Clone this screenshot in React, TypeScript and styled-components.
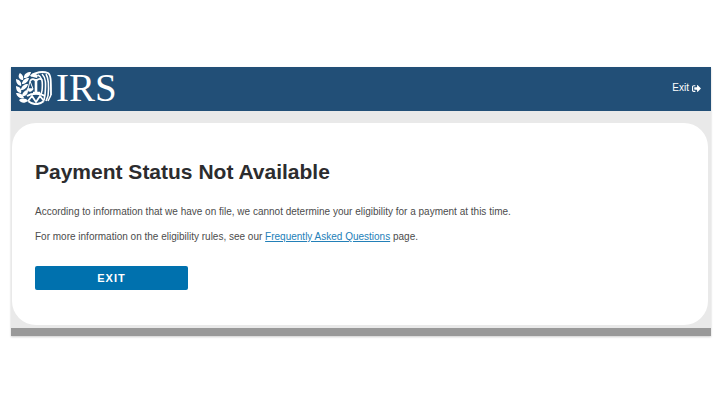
import React, { FC } from 'react';
import { FaSignOutAlt } from 'react-icons/fa';
import styled, { createGlobalStyle } from 'styled-components';

const GlobalStyle = createGlobalStyle`
  * {
    box-sizing: border-box;
  }

  body {
    margin: 0;
    background: #ffffff;
    color: #2c2c2e;
    font-family: "Liberation Sans", Arial, sans-serif;
    font-size: 10px;
    line-height: 16px;
  }
`;

const PageRoot = styled('div')`
  padding: 67px 9px 32px 11px;
`;

const Frame = styled('div')`
  background: #e9e9e9;
  border-bottom: 8px solid #999999;
  box-shadow: 0 1px 2px rgba(0, 0, 0, 0.2);
`;

const Header = styled('header')`
  display: flex;
  align-items: center;
  justify-content: space-between;
  height: 44px;
  padding: 0 10px 2px 5px;
  background: #224f77;
  color: #ffffff;
`;

const Brand = styled('div')`
  display: flex;
  align-items: center;
  gap: 4px;
`;

const BrandName = styled('span')`
  font-family: "Liberation Serif", "Times New Roman", serif;
  font-size: 39px;
  line-height: 42px;
`;

const ExitLink = styled('a')`
  display: flex;
  align-items: center;
  gap: 3px;
  color: #ffffff;
  text-decoration: none;
`;

const Main = styled('main')`
  padding: 12px 3px 3px 1px;
`;

const Card = styled('section')`
  padding: 36px 23px 35px;
  background: #ffffff;
  border-radius: 24px;
`;

const Title = styled('h1')`
  margin: 0 0 19px;
  font-size: 21px;
  line-height: 26px;
`;

const Text = styled('p')`
  margin: 0 0 9px;
  color: #4c4c4c;
`;

const TextLink = styled('a')`
  color: #2380b8;
  text-decoration: underline;
`;

const ExitButton = styled('button')`
  display: block;
  width: 153px;
  height: 24px;
  margin-top: 21px;
  padding: 0;
  background: #0071ae;
  border: 0;
  border-radius: 2px;
  color: #ffffff;
  font: bold 11px/24px "Liberation Sans", Arial, sans-serif;
  letter-spacing: 1px;
`;

const Emblem: FC = () => {
  return (
    <svg width='36' height='34' viewBox='0 0 36 34' fill='none' stroke='#ffffff' aria-hidden='true'>
      {/* laurel branch */}
      <g fill='#ffffff' stroke='none'>
        <path d='M8 6C8 3 11 1 15 1C14 5 12 7 8 7Z' />
        <path d='M6 9C2 8 2 4 4 2C7 4 8 6 7 9Z' />
        <path d='M6 12C7 9 9 7 13 7C12 11 9 13 6 13Z' />
        <path d='M5 15C1 14 0 11 0 8C4 9 6 12 5 15Z' />
        <path d='M5 18C6 15 8 13 12 13C11 17 8 19 5 19Z' />
        <path d='M5 22C1 22 0 18 0 15C4 16 6 18 5 22Z' />
        <path d='M6 24C7 21 9 19 12 19C12 23 10 25 7 25Z' />
        <path d='M8 27C4 28 1 26 0 22C4 22 7 23 8 27Z' />
        <path d='M12 30C8 33 5 32 3 29C6 27 10 27 12 30Z' />
      </g>
      {/* scales */}
      <path d='M14 10C16 7 18 8 20 10C22 8 24 7 26 9' strokeWidth='1.6' />
      <path d='M20 8V21M17 22H24' strokeWidth='2.6' />
      <path d='M14 10L12 18H17Z' strokeWidth='1' />
      <path d='M11 18C12 21 16 21 17 18Z' fill='#ffffff' strokeWidth='1' />
      {/* eagle claws and tail */}
      <path d='M11 25C16 22 24 22 29 25' strokeWidth='1.8' />
      <path d='M12 30L16 25L20 31L24 25L28 30M12 30C17 34 23 34 28 30' strokeWidth='1.8' />
      {/* eagle head and wing */}
      <path d='M15 5C19 1 27 0 32 2C35 4 35 9 35 24' strokeWidth='1.8' />
      <path d='M14 5L17 2L22 4L21 7L17 6Z' fill='#ffffff' stroke='none' />
      <path d='M22 4C26 6 27 10 26 20M26 3C30 7 30 12 29 24M30 3C33 8 33 16 32 25' strokeWidth='1.6' />
      <path d='M26 20L25 23M29 24L28 29M32 25L30 30M35 24L32 30' strokeWidth='1.6' />
    </svg>
  );
};

const App: FC = () => {
  return (
    <PageRoot>
      <GlobalStyle />
      <Frame>
        <Header>
          <Brand>
            <Emblem />
            <BrandName>IRS</BrandName>
          </Brand>
          <ExitLink href='#exit'>
            Exit
            <FaSignOutAlt size={9} aria-hidden='true' />
          </ExitLink>
        </Header>
        <Main>
          <Card>
            <Title>Payment Status Not Available</Title>
            <Text>
              According to information that we have on file, we cannot determine your eligibility for a payment at this time.
            </Text>
            <Text>
              For more information on the eligibility rules, see our{' '}
              <TextLink href='#faq'>Frequently Asked Questions</TextLink> page.
            </Text>
            <ExitButton type='button'>EXIT</ExitButton>
          </Card>
        </Main>
      </Frame>
    </PageRoot>
  );
};

export default App;
